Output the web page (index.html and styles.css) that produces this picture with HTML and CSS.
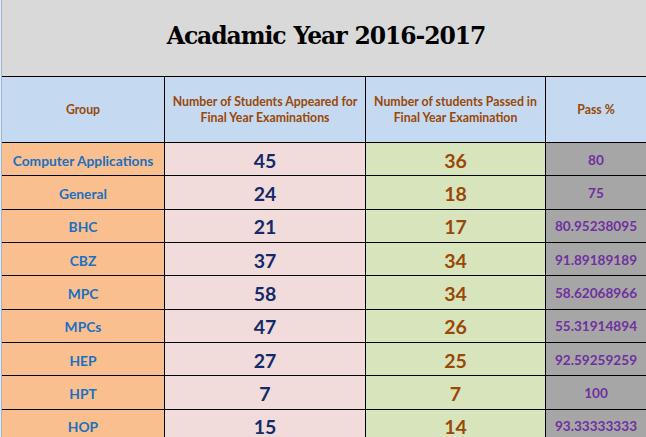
FILE: index.html
```html
<!DOCTYPE html>
<html>
<head>
<meta charset="utf-8">
<link rel="stylesheet" href="styles.css">
</head>
<body>
<div class="sheet">
  <div class="title-band"><h1 class="title">Acadamic Year 2016-2017</h1></div>
  <div class="grid">
    <div class="cell head">Group</div>
    <div class="cell head">Number of Students Appeared for<br>Final Year Examinations</div>
    <div class="cell head">Number of students Passed in<br>Final Year Examination</div>
    <div class="cell head">Pass %</div>

    <div class="cell grp">Computer Applications</div><div class="cell app">45</div><div class="cell pas">36</div><div class="cell pct">80</div>
    <div class="cell grp">General</div><div class="cell app">24</div><div class="cell pas">18</div><div class="cell pct">75</div>
    <div class="cell grp">BHC</div><div class="cell app">21</div><div class="cell pas">17</div><div class="cell pct">80.95238095</div>
    <div class="cell grp">CBZ</div><div class="cell app">37</div><div class="cell pas">34</div><div class="cell pct">91.89189189</div>
    <div class="cell grp">MPC</div><div class="cell app">58</div><div class="cell pas">34</div><div class="cell pct">58.62068966</div>
    <div class="cell grp">MPCs</div><div class="cell app">47</div><div class="cell pas">26</div><div class="cell pct">55.31914894</div>
    <div class="cell grp">HEP</div><div class="cell app">27</div><div class="cell pas">25</div><div class="cell pct">92.59259259</div>
    <div class="cell grp">HPT</div><div class="cell app">7</div><div class="cell pas">7</div><div class="cell pct">100</div>
    <div class="cell grp">HOP</div><div class="cell app">15</div><div class="cell pas">14</div><div class="cell pct">93.33333333</div>
  </div>
</div>
</body>
</html>
```
FILE: styles.css
```css
html, body {
  margin: 0;
  padding: 0;
  background: #e4e9f0;
  overflow: hidden;
}
.sheet {
  margin-left: 1px;
  border-left: 1px solid #9fb5d5;
  width: 644px;
  height: 437px;
  overflow: hidden;
  font-family: Lato, "Liberation Sans", sans-serif;
  font-weight: bold;
}
.title-band {
  height: 76px;
  background: #d9d9d9;
  display: flex;
  align-items: center;
  justify-content: center;
}
.title {
  margin: 0 0 5px 4px;
  font-family: "DejaVu Serif", Georgia, serif;
  font-weight: bold;
  font-size: 23.5px;
  color: #000;
  letter-spacing: -1.1px;
  word-spacing: 1px;
}
.grid {
  display: grid;
  grid-template-columns: 162px 200px 179px 100px;
  grid-template-rows: 65px;
  grid-auto-rows: 32.34px;
  gap: 1px;
  background: #000;
  border-top: 1px solid #000;
}
.cell {
  display: flex;
  align-items: center;
  justify-content: center;
  text-align: center;
  overflow: hidden;
  white-space: nowrap;
}
.head {
  background: #c5d9f1;
  color: #984807;
  font-size: 12.3px;
  line-height: 16px;
  padding-top: 1px;
}
.grp {
  background: #fabf8f;
  color: #1b70c0;
  font-size: 13.8px;
  padding-top: 2px;
}
.app {
  background: #f2dcdb;
  color: #132a68;
  font-size: 19.5px;
  padding-top: 2px;
}
.pas {
  background: #d8e4bc;
  color: #984807;
  font-size: 19.5px;
  padding-top: 2px;
}
.pct {
  background: #a6a6a6;
  color: #7030a0;
  font-size: 13.6px;
  padding-top: 1px;
}
```
